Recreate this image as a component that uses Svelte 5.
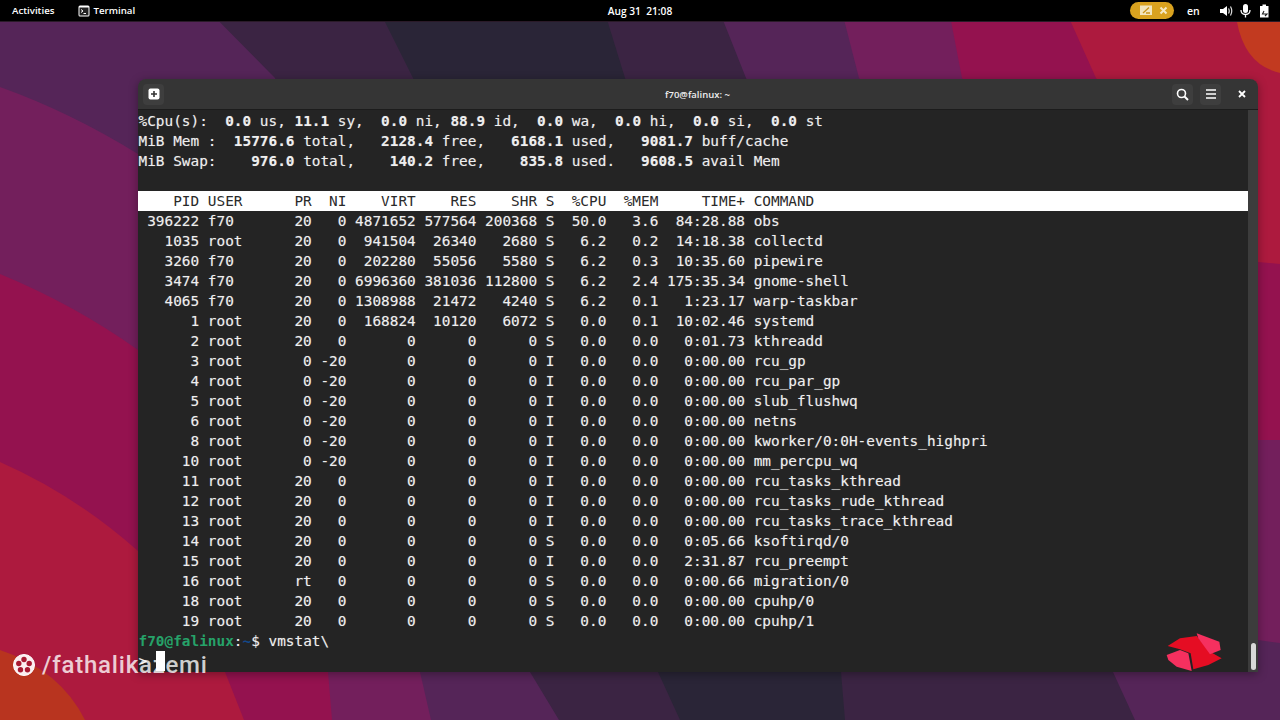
<script>
	const rows = [
		['396222', 'f70', '20', '0', '4871652', '577564', '200368', 'S', '50.0', '3.6', '84:28.88', 'obs'],
		['1035', 'root', '20', '0', '941504', '26340', '2680', 'S', '6.2', '0.2', '14:18.38', 'collectd'],
		['3260', 'f70', '20', '0', '202280', '55056', '5580', 'S', '6.2', '0.3', '10:35.60', 'pipewire'],
		['3474', 'f70', '20', '0', '6996360', '381036', '112800', 'S', '6.2', '2.4', '175:35.34', 'gnome-shell'],
		['4065', 'f70', '20', '0', '1308988', '21472', '4240', 'S', '6.2', '0.1', '1:23.17', 'warp-taskbar'],
		['1', 'root', '20', '0', '168824', '10120', '6072', 'S', '0.0', '0.1', '10:02.46', 'systemd'],
		['2', 'root', '20', '0', '0', '0', '0', 'S', '0.0', '0.0', '0:01.73', 'kthreadd'],
		['3', 'root', '0', '-20', '0', '0', '0', 'I', '0.0', '0.0', '0:00.00', 'rcu_gp'],
		['4', 'root', '0', '-20', '0', '0', '0', 'I', '0.0', '0.0', '0:00.00', 'rcu_par_gp'],
		['5', 'root', '0', '-20', '0', '0', '0', 'I', '0.0', '0.0', '0:00.00', 'slub_flushwq'],
		['6', 'root', '0', '-20', '0', '0', '0', 'I', '0.0', '0.0', '0:00.00', 'netns'],
		['8', 'root', '0', '-20', '0', '0', '0', 'I', '0.0', '0.0', '0:00.00', 'kworker/0:0H-events_highpri'],
		['10', 'root', '0', '-20', '0', '0', '0', 'I', '0.0', '0.0', '0:00.00', 'mm_percpu_wq'],
		['11', 'root', '20', '0', '0', '0', '0', 'I', '0.0', '0.0', '0:00.00', 'rcu_tasks_kthread'],
		['12', 'root', '20', '0', '0', '0', '0', 'I', '0.0', '0.0', '0:00.00', 'rcu_tasks_rude_kthread'],
		['13', 'root', '20', '0', '0', '0', '0', 'I', '0.0', '0.0', '0:00.00', 'rcu_tasks_trace_kthread'],
		['14', 'root', '20', '0', '0', '0', '0', 'S', '0.0', '0.0', '0:05.66', 'ksoftirqd/0'],
		['15', 'root', '20', '0', '0', '0', '0', 'I', '0.0', '0.0', '2:31.87', 'rcu_preempt'],
		['16', 'root', 'rt', '0', '0', '0', '0', 'S', '0.0', '0.0', '0:00.66', 'migration/0'],
		['18', 'root', '20', '0', '0', '0', '0', 'S', '0.0', '0.0', '0:00.00', 'cpuhp/0'],
		['19', 'root', '20', '0', '0', '0', '0', 'S', '0.0', '0.0', '0:00.00', 'cpuhp/1']
	];

	// same column widths as top prints them
	function fmt(r) {
		return [
			r[0].padStart(7), r[1].padEnd(8), r[2].padStart(3), r[3].padStart(3),
			r[4].padStart(7), r[5].padStart(6), r[6].padStart(6), r[7],
			r[8].padStart(5), r[9].padStart(5), r[10].padStart(9), r[11]
		].join(' ');
	}

	const header = fmt(['PID', 'USER', 'PR', 'NI', 'VIRT', 'RES', 'SHR', 'S', '%CPU', '%MEM', 'TIME+', 'COMMAND']);

	const summary = [
		[['%Cpu(s):  '], ['0.0', 1], [' us, '], ['11.1', 1], [' sy,  '], ['0.0', 1], [' ni, '], ['88.9', 1], [' id,  '], ['0.0', 1], [' wa,  '], ['0.0', 1], [' hi,  '], ['0.0', 1], [' si,  '], ['0.0', 1], [' st']],
		[['MiB Mem :  '], ['15776.6', 1], [' total,   '], ['2128.4', 1], [' free,   '], ['6168.1', 1], [' used,   '], ['9081.7', 1], [' buff/cache']],
		[['MiB Swap:    '], ['976.0', 1], [' total,    '], ['140.2', 1], [' free,    '], ['835.8', 1], [' used.   '], ['9608.5', 1], [' avail Mem']]
	];
</script>

<div class="desktop">
	<svg class="wallpaper" viewBox="0 0 1280 720" preserveAspectRatio="none" aria-hidden="true">
		<rect width="1280" height="720" fill="#552558" />
		<path fill="#3b2443" d="M198 0L275 78L530 672L559 720H1135L1113 672L746 78L715 0Z" />
		<path fill="#2a2537" d="M374 0L413 78L658 672L680 720H845L841 672L625 78L601 0Z" />
		<path fill="#731f5c" d="M0 87Q70 112 138 154L420 672L431 720H0Z" />
		<path fill="#94124f" d="M0 274Q75 305 138 350L328 672L332 720H0Z" />
		<path fill="#ad1a3e" d="M0 462Q75 495 138 551Q200 610 225 672L244 720H0Z" />
		<path fill="#b8341f" d="M0 650Q60 670 85 720H0Z" />
		<path fill="#731f5c" d="M839 0L859 78L1258 640L1280 643V0Z" />
		<path fill="#94124f" d="M947 0L962 78L1258 440H1280V0Z" />
		<path fill="#ad1a3e" d="M1061 0L1096 78L1258 262L1280 264V0Z" />
		<path fill="#c23a20" d="M1234 0L1237 22Q1245 65 1280 73V0Z" />
	</svg>

	<header class="topbar">
		<div class="left">
			<span class="activities">Activities</span>
			<span class="app">
				<svg width="12" height="12" viewBox="0 0 12 12" aria-hidden="true">
					<rect x="0.5" y="0.5" width="11" height="11" rx="1.5" fill="#fff" />
					<rect x="1.5" y="2.5" width="9" height="8" fill="#222" />
					<path d="M3 4.5L5 6L3 7.5M5.5 8.5H8" stroke="#fff" stroke-width="1" fill="none" />
				</svg>
				Terminal
			</span>
		</div>
		<div class="clock">Aug 31&nbsp; 21:08</div>
		<div class="right">
			<span class="pill">
				<svg width="14" height="12" viewBox="0 0 14 12" aria-hidden="true">
					<rect x="1" y="0.5" width="12" height="9.5" fill="#f3e6bd" />
					<path d="M4 8L10 2.5M7 8H11" stroke="#c8941c" stroke-width="1.3" fill="none" />
				</svg>
				<svg width="9" height="9" viewBox="0 0 9 9" aria-hidden="true">
					<path d="M1.5 1.5L7.5 7.5M7.5 1.5L1.5 7.5" stroke="#f5e8c4" stroke-width="2" />
				</svg>
			</span>
			<span class="lang">en</span>
			<svg class="speaker" width="13" height="12" viewBox="0 0 13 12" aria-hidden="true">
				<path d="M0 4H3L7 1V11L3 8H0Z" fill="#fff" />
				<path d="M8.5 3.5Q10 6 8.5 8.5M10.5 1.5Q13 6 10.5 10.5" stroke="#ddd" stroke-width="1.2" fill="none" />
			</svg>
			<svg class="mic" width="11" height="14" viewBox="0 0 11 14" aria-hidden="true">
				<rect x="3" y="0" width="5" height="9" rx="2.5" fill="#fff" />
				<path d="M1 6Q1 10.5 5.5 10.5T10 6M5.5 10.5V13.5" stroke="#fff" stroke-width="1.3" fill="none" />
			</svg>
			<svg class="battery" width="11" height="14" viewBox="0 0 11 14" aria-hidden="true">
				<path d="M3.5 0.5H7V2H9.5V13.5H1V2H3.5Z" fill="#fff" />
				<path d="M5 7L3.5 10H8L6 12" stroke="#222" stroke-width="1.1" fill="none" />
			</svg>
		</div>
	</header>

	<section class="window">
		<div class="titlebar">
			<button class="hbtn" aria-label="New tab">
				<svg width="12" height="12" viewBox="0 0 12 12" aria-hidden="true">
					<rect x="0.5" y="0.5" width="11" height="11" rx="2" fill="#fff" />
					<path d="M6 3V9M3 6H9" stroke="#333" stroke-width="1.6" />
				</svg>
			</button>
			<div class="title">f70@falinux: ~</div>
			<button class="hbtn" aria-label="Search">
				<svg width="13" height="13" viewBox="0 0 13 13" aria-hidden="true">
					<circle cx="5.5" cy="5.5" r="4" stroke="#fff" stroke-width="1.6" fill="none" />
					<path d="M8.5 8.5L12 12" stroke="#fff" stroke-width="2" />
				</svg>
			</button>
			<button class="hbtn menu" aria-label="Menu">
				<svg width="12" height="10" viewBox="0 0 12 10" aria-hidden="true">
					<path d="M1 1H11M1 5H11M1 9H11" stroke="#fff" stroke-width="1.5" />
				</svg>
			</button>
			<button class="close" aria-label="Close">
				<svg width="8" height="8" viewBox="0 0 8 8" aria-hidden="true">
					<path d="M1 1L7 7M7 1L1 7" stroke="#fff" stroke-width="1.8" />
				</svg>
			</button>
		</div>
		<div class="body">
			<div class="term">
				{#each summary as line}
					<div class="line">{#each line as part}{#if part[1]}<b>{part[0]}</b>{:else}{part[0]}{/if}{/each}</div>
				{/each}
				<div class="line"></div>
				<div class="line head">{header}</div>
				{#each rows as r}
					<div class="line">{fmt(r)}</div>
				{/each}
				<div class="line"><b class="host">f70@falinux</b>:<b class="cwd">~</b>$ vmstat\</div>
				<div class="line">&gt; <span class="cursor"> </span></div>
			</div>
			<div class="scrollbar"><div class="thumb"></div></div>
		</div>
	</section>

	<div class="watermark">
		<svg width="24" height="24" viewBox="0 0 24 24" aria-hidden="true">
			<circle cx="12" cy="12" r="10.5" fill="#fbeef0" stroke="#fff" stroke-width="1" />
			<circle cx="12" cy="6.5" r="2.7" fill="#a81a32" />
			<circle cx="6.8" cy="10.5" r="2.7" fill="#a81a32" />
			<circle cx="17.2" cy="10.5" r="2.7" fill="#a81a32" />
			<circle cx="8.5" cy="16.8" r="2.7" fill="#a81a32" />
			<circle cx="15.5" cy="16.8" r="2.7" fill="#a81a32" />
		</svg>
		<span>/fathalikazemi</span>
	</div>

	<svg class="redmark" viewBox="0 0 450 330" aria-hidden="true">
		<path fill="#e50d23" d="M113 108L150 85L200 78L240 125L275 145L235 165L190 178L182 130L150 118Z" />
		<path fill="#f5305f" d="M200 70L268 95L272 120L240 133L205 85Z" />
		<path fill="#f5305f" d="M110 135L150 120L175 130L185 183L140 170L115 150Z" />
	</svg>
</div>

<style>
	:global(body) {
		margin: 0;
		background: #000;
	}

	.desktop {
		position: relative;
		width: 1280px;
		height: 720px;
		overflow: hidden;
		font-family: "Open Sans", "Noto Sans", sans-serif;
	}

	.wallpaper {
		position: absolute;
		inset: 0;
		width: 100%;
		height: 100%;
	}

	.topbar {
		position: relative;
		height: 21px;
		background: #000;
		color: #fff;
		display: grid;
		grid-template-columns: 1fr auto 1fr;
		align-items: center;
		font-size: 9.7px;
		font-weight: 600;
		border-bottom: 1px solid #2a1a28;
	}

	.left {
		display: flex;
		align-items: center;
		padding-left: 12px;
		gap: 24px;
	}

	.app {
		display: flex;
		align-items: center;
		gap: 3px;
	}

	.clock {
		font-size: 10.2px;
	}

	.right {
		display: flex;
		align-items: center;
		justify-content: flex-end;
		padding-right: 10px;
	}

	.pill {
		width: 44px;
		height: 17px;
		box-sizing: border-box;
		background: #d9a21f;
		border-radius: 9px;
		display: flex;
		align-items: center;
		gap: 6px;
		padding-left: 9px;
	}

	.lang {
		margin-left: 13px;
		width: 31px;
		font-size: 10.5px;
	}

	.speaker {
		margin-left: 2px;
	}

	.mic {
		margin-left: 7px;
	}

	.battery {
		margin-left: 8px;
	}

	.window {
		position: absolute;
		left: 138px;
		top: 79px;
		width: 1120px;
		height: 593px;
		display: flex;
		flex-direction: column;
		border-radius: 8px 8px 0 0;
		overflow: hidden;
		box-shadow: 0 2px 10px rgba(0, 0, 0, 0.35);
	}

	.titlebar {
		height: 31px;
		flex: none;
		box-sizing: border-box;
		background: #353535;
		border-bottom: 1px solid #1c1c1c;
		display: flex;
		align-items: center;
		padding: 0 8px 0 5px;
		gap: 7px;
	}

	.title {
		flex: 1;
		text-align: center;
		color: #eee;
		font-size: 9.5px;
		font-weight: 600;
		padding-left: 59px;
	}

	.hbtn {
		width: 21px;
		height: 21px;
		padding: 0;
		border: 0;
		border-radius: 4px;
		background: #3e3e3e;
		display: flex;
		align-items: center;
		justify-content: center;
	}

	.close {
		width: 16px;
		height: 21px;
		padding: 0;
		margin-left: 6px;
		border: 0;
		background: none;
		display: flex;
		align-items: center;
		justify-content: center;
	}

	.body {
		flex: 1;
		display: flex;
		background: #242424;
		min-height: 0;
	}

	.term {
		flex: 1;
		min-width: 0;
		padding: 1px 0 0 0.5px;
		color: #eee;
		font-family: "DejaVu Sans Mono", monospace;
		font-size: 14.4px;
		line-height: 20px;
		text-shadow: 0 0 1px rgba(255, 255, 255, 0.35);
	}

	.line {
		height: 20px;
		white-space: pre;
	}

	.line b {
		font-weight: 700;
	}

	.head {
		background: #fff;
		color: #2a2a2a;
		margin-left: -0.5px;
		padding-left: 0.5px;
		text-shadow: none;
	}

	.host {
		color: #26a269;
		text-shadow: none;
	}

	.cwd {
		color: #12488b;
		text-shadow: none;
	}

	.cursor {
		display: inline-block;
		width: 9px;
		height: 20px;
		background: #fff;
		vertical-align: top;
	}

	.scrollbar {
		width: 10px;
		flex: none;
		background: #3c3c3c;
		position: relative;
	}

	.thumb {
		position: absolute;
		left: 3px;
		bottom: 2px;
		width: 5px;
		height: 27px;
		border-radius: 3px;
		background: #d8d8d8;
	}

	.watermark {
		position: absolute;
		left: 12px;
		top: 653px;
		display: flex;
		align-items: center;
		gap: 6px;
		color: rgba(255, 255, 255, 0.78);
		font-family: Roboto, sans-serif;
		font-size: 24px;
		font-weight: 500;
		letter-spacing: 0.8px;
		line-height: 24px;
	}

	.redmark {
		position: absolute;
		left: 1130px;
		top: 610px;
		width: 150px;
		height: 110px;
	}
</style>
